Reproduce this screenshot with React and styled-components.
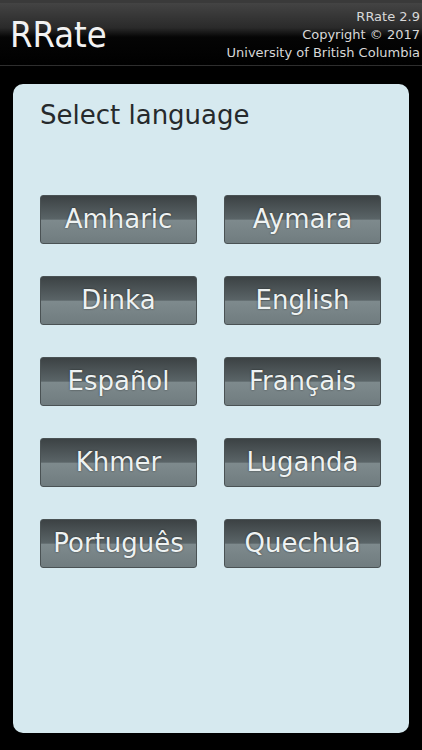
import styled, { createGlobalStyle } from "styled-components";

const GlobalStyle = createGlobalStyle`
  html, body {
    margin: 0;
    padding: 0;
    background: #000;
  }
  body {
    font-family: "DejaVu Sans", sans-serif;
  }
`

const languages = [
  "Amharic", "Aymara",
  "Dinka", "English",
  "Español", "Français",
  "Khmer", "Luganda",
  "Português", "Quechua",
]

const App = () => {
  return (
    <Screen>
      <GlobalStyle />
      <TitleBar>
        <AppName>RRate</AppName>
        <Credits>
          <span>RRate 2.9</span>
          <span>Copyright © 2017</span>
          <span>University of British Columbia</span>
        </Credits>
      </TitleBar>
      <Panel>
        <Heading>Select language</Heading>
        <LanguageGrid>
          {languages.map((lang) => (
            <LangButton key={lang}>{lang}</LangButton>
          ))}
        </LanguageGrid>
      </Panel>
    </Screen>
  )
}

const Screen = styled.div`
  width: 422px;
  height: 750px;
  background: #000;
  display: flex;
  flex-direction: column;
  overflow: hidden;
`

const TitleBar = styled.header`
  height: 66px;
  box-sizing: border-box;
  border-top: 3px solid #3a3a3a;
  border-bottom: 1px solid #2e2e2e;
  background: linear-gradient(to bottom, #444 0%, #2a2a2a 40%, #050505 55%, #000 100%);
  display: flex;
  justify-content: space-between;
  align-items: flex-start;
  padding: 0 2px 0 10px;
`

const AppName = styled.h1`
  margin: 14px 0 0;
  font-family: "DejaVu Sans Condensed", "DejaVu Sans", sans-serif;
  font-size: 36px;
  font-weight: normal;
  line-height: 36px;
  color: #f2f2f2;
`

const Credits = styled.div`
  display: flex;
  flex-direction: column;
  align-items: flex-end;
  margin-top: 5px;
  font-size: 13px;
  line-height: 18px;
  color: #d8d8d8;
`

const Panel = styled.main`
  margin: 18px 13px 17px;
  flex: 1;
  background: #d6e9ef;
  border-radius: 10px;
  padding: 14px 27px;
`

const Heading = styled.h2`
  margin: 0;
  font-size: 26px;
  font-weight: normal;
  line-height: 34px;
  color: #262a2c;
`

const LanguageGrid = styled.div`
  margin-top: 63px;
  display: grid;
  grid-template-columns: 157px 157px;
  column-gap: 27px;
  row-gap: 32px;
`

const LangButton = styled.button`
  height: 49px;
  border: 1px solid #4a5254;
  border-radius: 3px;
  padding: 0 0 2px;
  font-family: inherit;
  font-size: 26px;
  color: #eef2f2;
  text-shadow: 0 0 2px rgba(0, 0, 0, 0.6);
  background: linear-gradient(
    to bottom,
    #3c4244 0%,
    #5a6467 49%,
    #7e8a8d 52%,
    #707c7f 100%
  );
  cursor: pointer;
`

export default App
